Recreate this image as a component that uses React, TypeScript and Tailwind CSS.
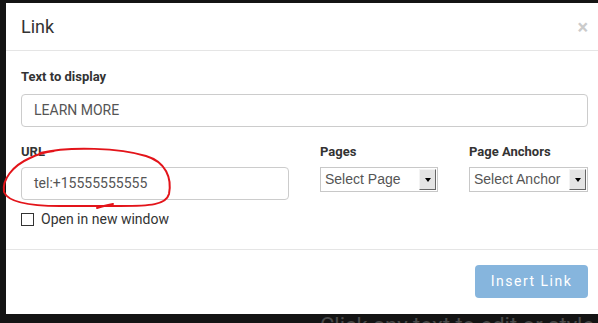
import React from "react";

function SelectBox({ label }: { label: string }) {
  return (
    <div className="flex h-[25px] w-full items-center border border-[#c8c8c8] bg-white pl-[4px] pr-[1px]">
      <span className="flex-1 text-[14px] text-[#555]" style={{ fontFamily: "'Liberation Sans', Arial, sans-serif" }}>
        {label}
      </span>
      <div className="flex h-[21px] w-[17px] items-center justify-center border border-t-[#f4f4f4] border-l-[#f4f4f4] border-r-[#666] border-b-[#666] bg-[#e4e4e4]">
        <div className="h-0 w-0 border-x-[3.5px] border-t-[4px] border-x-transparent border-t-black" />
      </div>
    </div>
  );
}

function App() {
  return (
    <div
      className="relative h-[323px] w-[598px] overflow-hidden bg-[#141414] pt-[3px]"
      style={{ fontFamily: "Roboto, 'Liberation Sans', sans-serif" }}
    >
      <div className="ml-[6px] h-[311px] w-[597px] bg-white">
        <div className="flex h-[48px] items-center justify-between border-b border-[#e5e5e5] px-[15px]">
          <span className="text-[18px] text-[#333]">Link</span>
          <span className="text-[20px] font-bold leading-none text-[#cbcbcb]">×</span>
        </div>

        <div className="px-[15px] pt-[16px]">
          <div className="text-[13px] font-bold text-[#333]">Text to display</div>
          <div className="mt-[7px] flex h-[33px] items-center rounded-[4px] border border-[#ccc] px-[12px] text-[14px] text-[#555]">
            LEARN MORE
          </div>

          <div className="mt-[15px] flex gap-[31px]">
            <div className="w-[268px]">
              <div className="text-[13px] font-bold text-[#333]">URL</div>
              <div className="mt-[6px] flex h-[33px] items-center rounded-[4px] border border-[#ccc] px-[12px] text-[14px] text-[#555]">
                tel:+15555555555
              </div>
              <label className="mt-[9px] flex items-center gap-[7px] text-[14px] text-[#333]">
                <span className="h-[13px] w-[13px] border border-[#333] bg-white" />
                Open in new window
              </label>
            </div>
            <div className="w-[118px]">
              <div className="text-[13px] font-bold text-[#333]">Pages</div>
              <div className="mt-[6px]">
                <SelectBox label="Select Page" />
              </div>
            </div>
            <div className="w-[119px]">
              <div className="text-[13px] font-bold text-[#333]">Page Anchors</div>
              <div className="mt-[6px]">
                <SelectBox label="Select Anchor" />
              </div>
            </div>
          </div>
        </div>

        <div className="mt-[19px] flex justify-end border-t border-[#e5e5e5] px-[15px] pt-[15px]">
          <button className="h-[33px] w-[113px] rounded-[4px] bg-[#86b5dd] text-[14px] tracking-[1.5px] text-white">
            Insert Link
          </button>
        </div>
      </div>

      <div className="pl-[320px] pt-[1px] text-[22px] leading-none text-[#4a4a4a]">
        Click any text to edit or style it
      </div>

      <svg
        className="pointer-events-none absolute left-0 top-0"
        width="598"
        height="323"
        viewBox="0 0 598 323"
      >
        <path
          d="M40 153 C70 146 120 148 146 156 C166 162 172 178 169 194 C166 205 150 206 120 206 L60 206 C30 206 8 202 4 192 C2 180 12 166 30 158 C38 154 46 152 54 151 M97 208 C103 206 108 205 113 204"
          fill="none"
          stroke="#e3141a"
          strokeWidth="2"
          strokeLinecap="round"
        />
      </svg>
    </div>
  );
}

export default App;
